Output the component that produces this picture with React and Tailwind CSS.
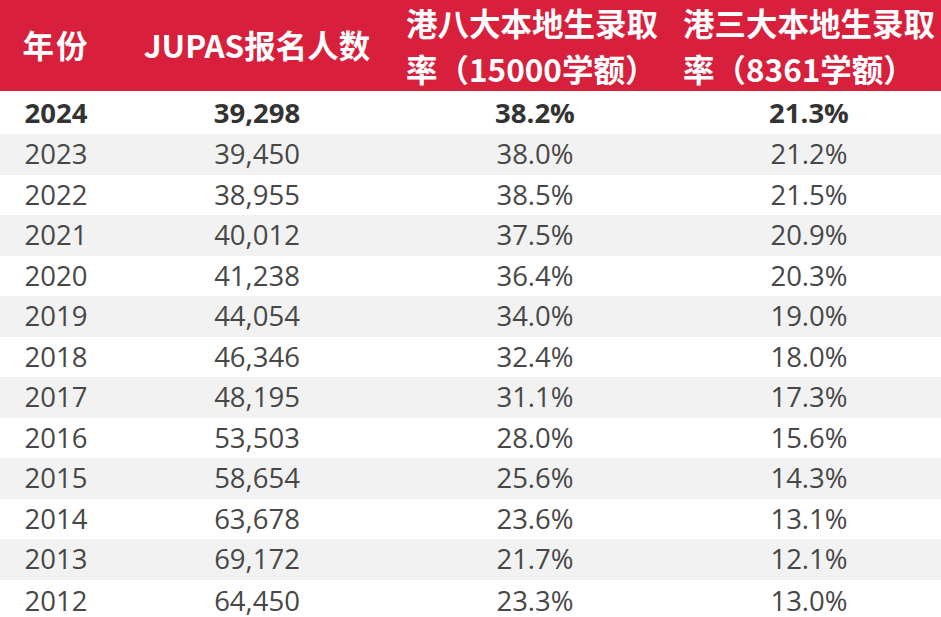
const rows = [
  ["2024", "39,298", "38.2%", "21.3%"],
  ["2023", "39,450", "38.0%", "21.2%"],
  ["2022", "38,955", "38.5%", "21.5%"],
  ["2021", "40,012", "37.5%", "20.9%"],
  ["2020", "41,238", "36.4%", "20.3%"],
  ["2019", "44,054", "34.0%", "19.0%"],
  ["2018", "46,346", "32.4%", "18.0%"],
  ["2017", "48,195", "31.1%", "17.3%"],
  ["2016", "53,503", "28.0%", "15.6%"],
  ["2015", "58,654", "25.6%", "14.3%"],
  ["2014", "63,678", "23.6%", "13.1%"],
  ["2013", "69,172", "21.7%", "12.1%"],
  ["2012", "64,450", "23.3%", "13.0%"],
];

const cols = "grid grid-cols-[112px_290px_266px_282px]";

function rowClass(i, last) {
  if (i === 0) return "h-[43px] bg-white font-bold text-[#333333] items-center";
  const bg = i % 2 === 1 ? "bg-[#f2f2f2]" : "bg-white";
  // last row is cut by the bottom edge of the picture
  const h = last ? "h-[37.5px] items-start pt-[7px]" : "h-[40.5px] items-center";
  return `${h} ${bg} text-[#474747]`;
}

export default function App() {
  return (
    <div className="w-[941px] h-[617px] overflow-hidden bg-white font-['Open_Sans','Noto_Sans_CJK_SC',sans-serif]">
      {/* header */}
      <div className={`${cols} h-[91px] bg-[#d81f3c] text-white font-bold text-[31.5px] font-['Noto_Sans_CJK_SC',sans-serif]`}>
        <div className="flex justify-center pt-[20px] leading-[48px] tracking-[2px]">年份</div>
        <div className="flex justify-center pt-[20px] leading-[48px]">JUPAS报名人数</div>
        <div className="flex justify-center pr-[6px]">
          <div className="text-left whitespace-nowrap leading-[45.5px]">
            <div>港八大本地生录取</div>
            <div>率（15000学额）</div>
          </div>
        </div>
        <div className="flex justify-center">
          <div className="text-left whitespace-nowrap leading-[45.5px]">
            <div>港三大本地生录取</div>
            <div>率（8361学额）</div>
          </div>
        </div>
      </div>

      {/* body */}
      {rows.map((r, i) => (
        <div
          key={r[0]}
          className={`${cols} text-[27.5px] leading-[28px] ${rowClass(i, i === rows.length - 1)}`}
        >
          {r.map((c, j) => (
            <div key={j} className="flex justify-center">
              {c}
            </div>
          ))}
        </div>
      ))}
    </div>
  );
}
